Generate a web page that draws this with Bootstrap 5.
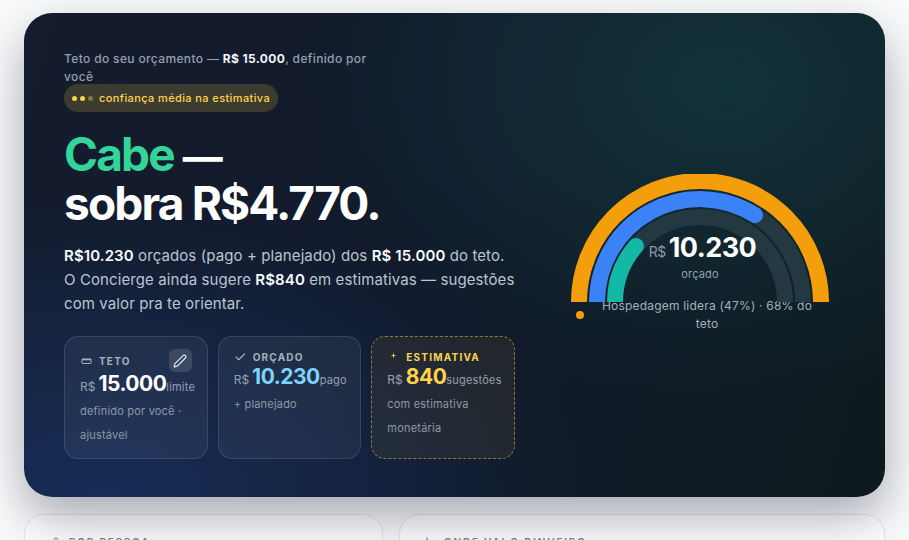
<!DOCTYPE html>
<html lang="pt-BR">
<head>
<meta charset="utf-8">
<title>Orçamento</title>
<link href="https://cdn.jsdelivr.net/npm/bootstrap@5.3.0/dist/css/bootstrap.min.css" rel="stylesheet">
<style>
html,body{height:540px;overflow:hidden}
body{background:#fafbfc;font-family:Inter,"Liberation Sans",sans-serif;padding:13px 24px 0;}
.hero{position:relative;z-index:2;height:484px;border-radius:28px;padding:37px 40px 0;color:#fff;
 box-shadow:0 20px 50px rgba(15,23,42,.36);
 background:
  radial-gradient(420px 320px at 700px 70px,rgba(20,70,75,.55),transparent 100%),
  radial-gradient(480px 300px at 80px 480px,rgba(24,50,100,.75),transparent 100%),
  linear-gradient(105deg,#141c2d 0%,#111a2b 50%,#0e191e 100%);}
.left-col{width:451px}
.ceil-line{width:320px;font-size:12px;line-height:18px;letter-spacing:.36px;color:#94a0b1;font-weight:500}
.ceil-line b{color:#f1f5f9;font-weight:700}
.conf-pill{width:fit-content;height:28px;border-radius:14px;padding:0 8px;background:rgba(250,204,60,.18);color:#fcd34d;font-size:11px;font-weight:500;letter-spacing:.39px;margin-top:-2px}
.dots-set{gap:3px;margin-right:6px}
.dotty{width:5px;height:5px;border-radius:50%;background:#fcd34d}
.dotty.dim{opacity:.4}
.head-big{font-size:46px;line-height:47px;font-weight:700;letter-spacing:-1.84px;margin:19px 0 0}
.head-big span{color:#34d399}
.head-big em{font-style:normal;font-size:40px}
.sub-txt{font-size:15px;line-height:24px;color:#bcc5d0;margin:17px 0 0;letter-spacing:.1px}
.sub-txt b{color:#f8fafc;font-weight:600}
.stat-row{margin-top:20px;gap:10px}
.stat-box{height:123px;min-width:0;border-radius:14px;border:1px solid rgba(148,163,184,.2);background:rgba(255,255,255,.055);padding:12px 15px;flex:1 1 0}
.stat-box.est{background:rgba(250,204,60,.07);border:1px dashed rgba(250,204,60,.5)}
.stat-lab{font-size:10px;font-weight:700;letter-spacing:1.2px;color:#a7b1bf;line-height:16px;gap:7px}
.stat-lab svg{flex:none}
.stat-box.est .stat-lab{color:#fcd34d}
.stat-val{line-height:23px;white-space:nowrap;font-size:11px;letter-spacing:.2px;color:#94a0b1}
.stat-val .cur{font-size:12px;margin-right:3px;letter-spacing:0}
.stat-val strong{font-size:21px;font-weight:700;letter-spacing:-.5px;color:#fff}
.stat-box .blue{color:#7dd3fc}
.stat-box .yel{color:#fcd34d}
.stat-note{font-size:11px;line-height:24px;color:#8e99a8;letter-spacing:.2px}
.edit-btn{width:23px;height:23px;border-radius:6px;background:rgba(255,255,255,.12);flex:none;margin-left:auto}
.gauge-col{position:absolute;left:547px;top:161px;width:258px}
.gauge-wrap{position:relative;height:128px}
.gauge-mid{position:absolute;left:0;right:0;top:56px}
.gauge-num{font-size:27px;font-weight:700;letter-spacing:-.54px;line-height:36px;margin-left:5px}
.gauge-cur{font-size:14px;color:#8d98a8;margin-right:3px}
.gauge-lab{font-size:11px;color:#95a1b1;line-height:18px;letter-spacing:.2px;margin-top:-5px}
.gauge-foot{font-size:12px;line-height:18px;color:#a5afbc;letter-spacing:.2px;margin-top:-5px}
.foot-text{width:216px;flex:none}
.foot-dot{width:8px;height:8px;border-radius:50%;background:#f59e0b;margin:0 15px 0 5px;flex:none}
.lower-row{gap:16px;margin-top:17px}
.lower-card{height:100px;background:#fff;border:1px solid #e5e7eb;border-radius:20px;padding:20px 25px}
.lc-a{width:359px}.lc-b{width:486px}
.lc-head{font-size:10px;letter-spacing:1.8px;font-weight:600;color:#7b8494;line-height:14px;gap:7px}
</style>
</head>
<body>
<div class="hero">
 <div class="left-col">
  <div class="ceil-line">Teto do seu orçamento — <b>R$ 15.000</b>, definido por você</div>
  <div class="conf-pill d-flex align-items-center"><span class="d-inline-flex dots-set"><i class="dotty"></i><i class="dotty"></i><i class="dotty dim"></i></span>confiança média na estimativa</div>
  <h1 class="head-big"><span>Cabe</span> <em>—</em><br>sobra R$4.770.</h1>
  <p class="sub-txt"><b>R$10.230</b> orçados (pago + planejado) dos <b>R$ 15.000</b> do teto. O Concierge ainda sugere <b>R$840</b> em estimativas — sugestões com valor pra te orientar.</p>
  <div class="d-flex stat-row">
   <div class="stat-box">
    <div class="stat-lab d-flex align-items-center"><svg width="12" height="10" viewBox="0 0 12 10" fill="none" stroke="#a7b1bf" stroke-width="1"><rect x="2" y="3" width="9" height="4.5" rx=".5"/><path d="M2 3.6h9" stroke-width="1.4"/></svg>TETO<button class="edit-btn btn p-0 border-0 d-flex align-items-center justify-content-center" type="button" aria-label="Editar"><svg width="14" height="14" viewBox="0 0 24 24" fill="none" stroke="#e2e8f0" stroke-width="2" stroke-linecap="round" stroke-linejoin="round"><path d="M21.2 6.8a2.8 2.8 0 0 0-4-4L3.8 16.2a2 2 0 0 0-.5.8L2 21.5a.5.5 0 0 0 .6.6l4.5-1.3a2 2 0 0 0 .8-.5z"/></svg></button></div>
    <div class="stat-val"><span class="cur">R$</span><strong>15.000</strong>limite</div>
    <div class="stat-note">definido por você · ajustável</div>
   </div>
   <div class="stat-box">
    <div class="stat-lab d-flex align-items-center"><svg width="12" height="12" viewBox="0 0 24 24" fill="none" stroke="#a7b1bf" stroke-width="2.2" stroke-linecap="round" stroke-linejoin="round"><path d="M21 6 9.5 17.5 4 12"/></svg>ORÇADO</div>
    <div class="stat-val"><span class="cur">R$</span><strong class="blue">10.230</strong>pago</div>
    <div class="stat-note">+ planejado</div>
   </div>
   <div class="stat-box est">
    <div class="stat-lab d-flex align-items-center"><svg width="12" height="12" viewBox="0 0 24 24" fill="#fcd34d"><path d="M12 1l2.2 8.8L23 12l-8.8 2.2L12 23l-2.2-8.8L1 12l8.8-2.2z" transform="translate(6.4 2.4) scale(.55)"/></svg>ESTIMATIVA</div>
    <div class="stat-val"><span class="cur">R$</span><strong class="yel">840</strong>sugestões</div>
    <div class="stat-note">com estimativa monetária</div>
   </div>
  </div>
 </div>
 <div class="gauge-col">
  <div class="gauge-wrap">
   <svg width="258" height="128" viewBox="0 0 258 128" fill="none" stroke-linecap="round" stroke-width="16" class="d-block">
    <path d="M8 128 A121 121 0 0 1 250 128" stroke="#f59e0b"/>
    <path d="M26 128 A103 103 0 0 1 232 128" stroke="#243842"/>
    <path d="M44 128 A85 85 0 0 1 214 128" stroke="#243842"/>
    <path d="M26 128 A103 103 0 0 1 184 41" stroke="#3b82f6"/>
    <path d="M44 128 A85 85 0 0 1 65 72" stroke="#14b8a6"/>
   </svg>
   <div class="gauge-mid text-center">
    <div class="gauge-num"><span class="gauge-cur fw-normal">R$</span>10.230</div>
    <div class="gauge-lab">orçado</div>
   </div>
  </div>
  <div class="d-flex align-items-center gauge-foot"><span class="foot-dot"></span><span class="foot-text text-center">Hospedagem lidera (47%) · 68% do teto</span></div>
 </div>
</div>
<div class="d-flex lower-row">
 <div class="lower-card lc-a"><div class="lc-head d-flex align-items-center"><svg width="12" height="12" viewBox="0 0 24 24" fill="none" stroke="#7b8494" stroke-width="2"><circle cx="12" cy="8" r="4"/><path d="M5 21c0-4 3-6 7-6s7 2 7 6"/></svg>POR PESSOA</div></div>
 <div class="lower-card lc-b"><div class="lc-head d-flex align-items-center"><svg width="12" height="12" viewBox="0 0 24 24" fill="none" stroke="#7b8494" stroke-width="2.4"><path d="M4 3v18M10 9h10"/></svg>ONDE VAI O DINHEIRO</div></div>
</div>
<script src="https://cdn.jsdelivr.net/npm/bootstrap@5.3.0/dist/js/bootstrap.bundle.min.js"></script>
</body>
</html>
